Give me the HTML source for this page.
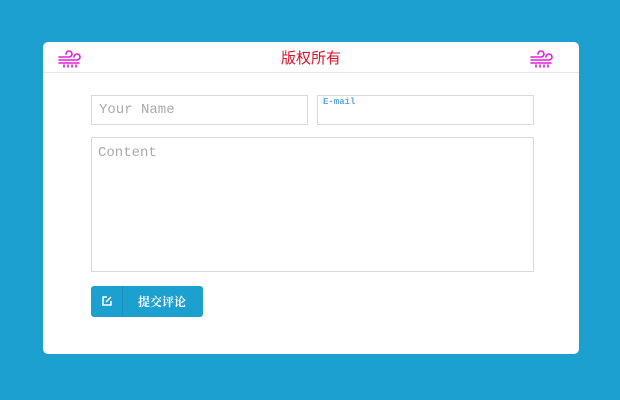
<!DOCTYPE html>
<html><head><meta charset="utf-8"><style>
*{box-sizing:border-box;margin:0;padding:0}
body{width:620px;height:400px;background:#1ba0cf;position:relative;overflow:hidden;font-family:"Liberation Serif","Noto Serif CJK SC",serif}
.card{position:absolute;left:43px;top:42px;width:536px;height:312px;background:#fff;border-radius:5px}
.hd{position:absolute;left:0;top:0;width:100%;height:31px;border-bottom:1px solid #e8e8e8}
.title{position:absolute;left:0;width:100%;top:5px;text-align:center;color:#e0102a;font-size:15px;font-family:"Liberation Sans","Noto Sans CJK SC",sans-serif}
.ic{position:absolute;top:7px}
.box{position:absolute;border:1px solid #d9d9d9;background:#fff}
.ph{position:absolute;color:#aaa;font-family:"Liberation Mono","Noto Sans CJK SC",monospace}
.btn{position:absolute;left:48px;top:244px;width:112px;height:31px;background:#1ba0cf;border-radius:3px;color:#fff}
.btn .l{position:absolute;left:0;top:0;width:32px;height:31px;border-right:1px solid #1790bb}
.btn .t{position:absolute;left:47px;top:7px;font-size:12px;font-weight:bold;font-family:"Noto Serif CJK SC",serif}
</style></head><body>
<div class="card">
 <div class="hd">
  <svg class="ic" style="left:14px" width="26" height="20" viewBox="0 0 26 20" fill="none" stroke="#e020d8" stroke-width="1.6" stroke-linecap="round">
   <path d="M2 8H12a3 3 0 1 0-3-3"/><path d="M2 11H20a3 3 0 1 0-3-3"/><path d="M2 14H22"/><path d="M7 16v2M11 16v2M15 16v2M19 16v2"/></svg>
  <svg class="ic" style="left:486px" width="26" height="20" viewBox="0 0 26 20" fill="none" stroke="#e020d8" stroke-width="1.6" stroke-linecap="round">
   <path d="M2 8H12a3 3 0 1 0-3-3"/><path d="M2 11H20a3 3 0 1 0-3-3"/><path d="M2 14H22"/><path d="M7 16v2M11 16v2M15 16v2M19 16v2"/></svg>
  <div class="title">版权所有</div>
 </div>
 <div class="box" style="left:48px;top:53px;width:217px;height:30px"><span class="ph" style="left:7px;top:6px;font-size:14px">Your Name</span></div>
 <div class="box" style="left:274px;top:53px;width:217px;height:30px"><span class="ph" style="left:5px;top:1px;font-size:9px;color:#5aa9e0;font-weight:bold">E-mail</span></div>
 <div class="box" style="left:48px;top:95px;width:443px;height:135px"><span class="ph" style="left:6px;top:7px;font-size:14px">Content</span></div>
 <div class="btn"><div class="l"><svg style="position:absolute;left:10px;top:9px" width="12" height="12" viewBox="0 0 12 12" fill="none" stroke="#fff" stroke-width="1.5"><path d="M6 2H2v8h8V6"/><path d="M5 7l5-5" /></svg></div><div class="t">提交评论</div></div>
</div>
</body></html>
